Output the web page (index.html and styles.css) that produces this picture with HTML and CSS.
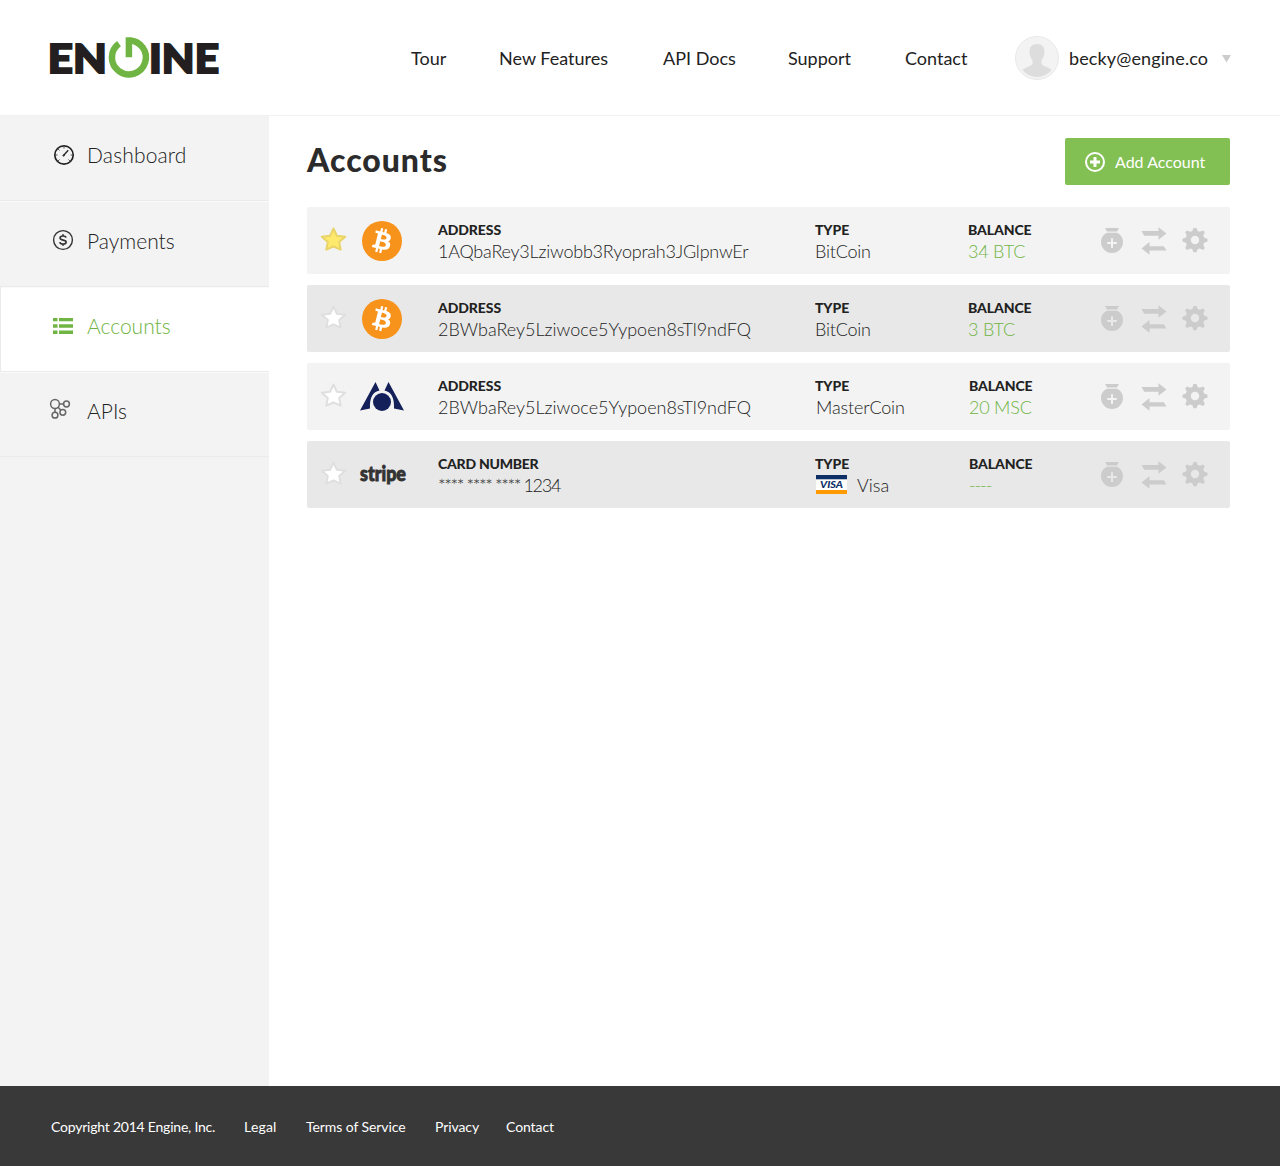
FILE: index.html
```html
<!DOCTYPE html>
<html lang="en">
<head>
<meta charset="utf-8">
<title>Engine – Accounts</title>
<link rel="stylesheet" href="styles.css">
</head>
<body>
<svg class="defs" width="0" height="0" aria-hidden="true">
  <symbol id="star" viewBox="0 0 28 26"><path d="M14 2.500l3.400 7.200 8.300 1-6 5.400 1.500 7.600-7.200-3.200-7.200 3.200 1.500-7.600-6-5.400 8.300-1z" stroke-width="2" stroke-linejoin="round"/></symbol>
  <symbol id="bitcoin" viewBox="0 0 64 64"><circle cx="32" cy="32" r="32" fill="#f7931a"/><path fill="#fff" d="M46.100 27.400c.6-4.300-2.600-6.500-7.100-8.100l1.400-5.800-3.500-.9-1.400 5.600-2.800-.7 1.400-5.600-3.500-.9-1.400 5.700-7.100-1.800-.9 3.800s2.600.6 2.500.6c1.400.4 1.700 1.300 1.600 2l-4 15.900c-.2.4-.6 1.100-1.600.8l-2.500-.6-1.700 4 7 1.800-1.500 5.800 3.500.9 1.400-5.800 2.800.7-1.400 5.700 3.500.9 1.400-5.800c6 1.100 10.500.7 12.400-4.700 1.500-4.400-.1-6.900-3.200-8.500 2.300-.5 4-2 4.500-5zm-8 11.200c-1.100 4.400-8.400 2-10.800 1.400l1.900-7.700c2.400.6 10 1.800 8.900 6.300zm1.100-11.300c-1 4-7.100 2-9.100 1.500l1.800-7c2 .5 8.300 1.400 7.300 5.500z"/></symbol>
  <symbol id="bag" viewBox="0 0 24 26"><path d="M5 0h14l-2 3.500H7z"/><path fill-rule="evenodd" d="M7 4.800h10c3.600 1.800 6 4.800 6 9.200a11 11 0 0 1-22 0C1 9.600 3.400 6.600 7 4.800zm4 5.500v3.800H7.200V16H11v4h2v-4h3.800v-1.900H13v-3.800z"/></symbol>
  <symbol id="swap" viewBox="0 0 26 28"><path d="M.5 4h17V.2l8 6.300-8 6.300V8.700H3.200z"/><path d="M25.500 23.500h-17v4.200l-8-6.300 8-6.300v4.100h14.300z"/></symbol>
  <symbol id="gear" viewBox="0 0 26 26"><path fill-rule="evenodd" d="M11.500 1h3l1.100 3 2.100.8 3.400-1.400 1.700 1.900-1.500 3.200.8 2 3.400 1.300v2.700l-3.400 1.300-.8 2 1.500 3.200-1.700 1.900-3.400-1.400-2.100.8L14.500 25.200h-3l-1.100-2.900-2.100-.8-3.400 1.400L3.200 21l1.500-3.200-.8-2L.5 14.500v-2.700l3.400-1.300.8-2-1.500-3.200 1.700-1.900 3.400 1.400 2.100-.8zM13 8.800a4.200 4.200 0 1 0 0 8.400 4.200 4.200 0 0 0 0-8.400z"/></symbol>
</svg>

<header class="header">
  <svg class="logo" width="170" height="44" viewBox="0 0 170 44" role="img" aria-label="Engine">
    <g class="logo-text">
      <text x="-2.200" y="36.500" textLength="59" lengthAdjust="spacingAndGlyphs">EN</text>
      <text x="99" y="36.500" textLength="70" lengthAdjust="spacingAndGlyphs">INE</text>
    </g>
    <path d="M69 7.600A17 17 0 1 0 78.800 4.400H75.700M78.900 1.200V21.300" fill="none" stroke="#70b544" stroke-width="6.500"/>
  </svg>
  <nav class="nav">
    <a>Tour</a><a>New Features</a><a>API Docs</a><a>Support</a><a>Contact</a>
  </nav>
  <div class="user">
    <svg width="44" height="44" viewBox="0 0 44 44"><circle cx="22" cy="22" r="21.500" fill="#f3f3f3" stroke="#e8e8e8"/><path fill="#ddd" d="M22 8c5 0 7.800 3.200 7.500 8-.2 3.500-1.300 6-3 8v3.500c0 2.500 7 3.500 10 6.500A19 19 0 0 1 22 41 19 19 0 0 1 7.500 34c3-3 10-4 10-6.500V24c-1.700-2-2.800-4.500-3-8-.3-4.800 2.500-8 7.500-8z"/></svg>
    <span class="email">becky@engine.co</span>
    <svg class="caret" width="9" height="8" viewBox="0 0 9 8"><path d="M0 0h9L4.500 7.500z" fill="#ccc"/></svg>
  </div>
</header>

<div class="body">
  <aside class="sidebar">
    <a class="item first">
      <svg width="24" height="24" viewBox="0 0 24 24" fill="none" stroke="#222"><circle cx="13" cy="12" r="9.200" stroke-width="1.700"/><path d="M12.500 12.500l4.700-5.200" stroke-width="1.300"/><circle cx="12.600" cy="12.500" r=".7"/><path stroke="#555" d="M13 3v2.500M4 12h2.500M19.500 12H22M7 6l1.500 1.500M7 18l1.500-1.500M19 18l-1.500-1.500"/></svg>
      <span>Dashboard</span></a>
    <a class="item payments">
      <svg width="24" height="24" viewBox="0 0 24 24" fill="none" stroke="#333"><circle cx="12" cy="11" r="9.400" stroke-width="1.400"/><path d="M15 8.600C14.700 7.400 13.500 7 12 7c-1.700 0-2.900.7-2.900 2 0 2.900 6 1.200 6 4 0 1.400-1.300 2.100-3 2.100-1.800 0-3-.7-3.200-2M12 5.300V7M12 15v1.800" stroke-width="1.700"/></svg>
      <span>Payments</span></a>
    <a class="item active">
      <svg width="24" height="24" viewBox="0 0 24 24" fill="#70b544"><path d="M2 4h4.500v3.300H2zM8 4h14v3.300H8zM2 10.300h4.500v3.400H2zM8 10.300h14v3.400H8zM2 16.600h4.500V20H2zM8 16.600h14V20H8z"/></svg>
      <span>Accounts</span></a>
    <a class="item apis">
      <svg width="24" height="24" viewBox="0 0 24 24" fill="none" stroke="#666" stroke-width="1.500"><circle cx="4" cy="5" r="4.400"/><circle cx="15.500" cy="5" r="2.900"/><circle cx="11.800" cy="13.300" r="2.900"/><circle cx="4" cy="16.200" r="2.900"/><path d="M8.400 5h4.200M4 9.400v3.900M7.200 8.200l2.500 2.900"/></svg>
      <span>APIs</span></a>
  </aside>

  <main class="main">
    <div class="title-row">
      <h1>Accounts</h1>
      <a class="add"><svg width="20" height="20" viewBox="0 0 20 20" fill="none" stroke="#fff"><circle cx="10" cy="10" r="9" stroke-width="2"/><path d="M10 5v10M5 10h10" stroke-width="3"/></svg><span>Add Account</span></a>
    </div>

    <section class="row">
      <svg class="star on"><use href="#star"/></svg>
      <div class="brand"><svg width="40" height="40"><use href="#bitcoin"/></svg></div>
      <div class="cell"><b>ADDRESS</b><span class="tight">1AQbaRey3Lziwobb3Ryoprah3JGlpnwEr</span></div>
      <div class="cell"><b>TYPE</b><span class="tight">BitCoin</span></div>
      <div class="cell money"><b>BALANCE</b><span class="tight">34 BTC</span></div>
      <div class="tools"><svg class="bag"><use href="#bag"/></svg><svg class="swap"><use href="#swap"/></svg><svg class="gear"><use href="#gear"/></svg></div>
    </section>
    <section class="row alt">
      <svg class="star"><use href="#star"/></svg>
      <div class="brand"><svg width="40" height="40"><use href="#bitcoin"/></svg></div>
      <div class="cell"><b>ADDRESS</b><span>2BWbaRey5Lziwoce5Yypoen8sTl9ndFQ</span></div>
      <div class="cell"><b>TYPE</b><span class="tight">BitCoin</span></div>
      <div class="cell money"><b>BALANCE</b><span class="tight">3 BTC</span></div>
      <div class="tools"><svg class="bag"><use href="#bag"/></svg><svg class="swap"><use href="#swap"/></svg><svg class="gear"><use href="#gear"/></svg></div>
    </section>
    <section class="row">
      <svg class="star"><use href="#star"/></svg>
      <div class="brand"><svg width="46" height="32" viewBox="0 0 46 32" fill="#14205a"><circle cx="23" cy="21" r="9"/><path d="M16.500 1l4 8.500C14 11 10.500 16 11 27.500L1 29.500zM29.500 1l-4 8.500C32 11 35.500 16 35 27.500l10 2z"/></svg></div>
      <div class="cell"><b>ADDRESS</b><span>2BWbaRey5Lziwoce5Yypoen8sTl9ndFQ</span></div>
      <div class="cell"><b>TYPE</b><span class="master">MasterCoin</span></div>
      <div class="cell money shift"><b>BALANCE</b><span class="tight">20 MSC</span></div>
      <div class="tools"><svg class="bag"><use href="#bag"/></svg><svg class="swap"><use href="#swap"/></svg><svg class="gear"><use href="#gear"/></svg></div>
    </section>
    <section class="row alt">
      <svg class="star"><use href="#star"/></svg>
      <div class="brand"><svg class="stripe-logo" width="50" height="32" viewBox="0 0 50 32"><text class="stripe" x="3" y="21.500" textLength="46" lengthAdjust="spacingAndGlyphs">stripe</text></svg></div>
      <div class="cell"><b class="card-label">CARD NUMBER</b><span class="card"><span class="mask">**** **** **** </span>1234</span></div>
      <div class="cell"><b>TYPE</b><span class="visa-line"><svg width="31" height="19" viewBox="0 0 31 19"><path fill="#fff" d="M0 0h31v19H0z"/><path fill="#0e2f66" d="M0 0h31v4.300H0z"/><path fill="#ff9a00" d="M0 15h31v4H0z"/><text class="visa" x="4" y="13.300" textLength="23" lengthAdjust="spacingAndGlyphs">VISA</text></svg><span>Visa</span></span></div>
      <div class="cell money shift"><b>BALANCE</b><span class="none">----</span></div>
      <div class="tools"><svg class="bag"><use href="#bag"/></svg><svg class="swap"><use href="#swap"/></svg><svg class="gear"><use href="#gear"/></svg></div>
    </section>
  </main>
</div>

<footer class="footer"><span class="copyright">Copyright 2014 Engine, Inc.</span><a class="legal">Legal</a><a>Terms of Service</a><a>Privacy</a><a>Contact</a></footer>
</body>
</html>
```
FILE: styles.css
```css
* { box-sizing: border-box; }
body { margin: 0; min-height: 1166px; display: flex; flex-direction: column; font-family: Lato, "Liberation Sans", sans-serif; color: #222; background: #fff; }
svg { display: block; flex: none; }
.defs { position: absolute; }

.header { height: 116px; border-bottom: 1px solid #f1f1f1; display: flex; align-items: center; padding-left: 50px; }
.logo { overflow: visible; }
.logo-text { font-weight: 900; font-size: 40.5px; fill: #231f20; stroke: #231f20; stroke-width: 2px; }
.nav { margin-left: 191px; width: 604px; display: grid; grid-template-columns: 88px 164px 125px 117px 1fr; font-size: 18px; line-height: 24px; white-space: nowrap; }
.user { display: flex; align-items: center; }
.email { margin-left: 10px; width: 153px; font-size: 18px; line-height: 24px; letter-spacing: .12px; }
.caret { margin-top: 3px; }

.body { flex: 1; display: flex; }
.sidebar { width: 269px; background: #f3f3f3; }
.item { height: 85px; display: flex; align-items: center; gap: 12px; padding: 0 0 6px 51px; font-size: 21px; font-weight: 300; border-bottom: 1px solid #ebebeb; box-shadow: inset 0 1px #fafafa; }
.item span { margin-top: -2px; }
.item.first { box-shadow: none; }
.item.first span { letter-spacing: .15px; }
.item.payments { height: 86px; }
.item.payments span { margin-top: 0; }
.item.active { background: #fff; color: #70b544; border-left: 1px solid #ebebeb; padding-left: 50px; }
.item.apis svg { overflow: visible; }

.main { flex: 1; padding: 22px 50px 0 38px; }
.title-row { height: 47px; display: flex; justify-content: space-between; margin-bottom: 22px; }
h1 { margin: 0; font-size: 32px; font-weight: 900; line-height: 43px; letter-spacing: .95px; color: #2b2b2b; }
.add { width: 165px; background: #82c053; border-radius: 2px; color: #fff; display: flex; align-items: center; gap: 10px; padding-left: 20px; font-size: 16px; }

.row { height: 67px; margin-bottom: 11px; border-radius: 2px; background: #f3f3f3; display: grid; grid-template-columns: 42px 67px 377px 153px 133px 1fr; padding-left: 12px; }
.row.alt { background: #e8e8e8; }
.star { width: 29px; height: 26px; margin-top: 19px; fill: #fff; stroke: #dfdfdf; }
.star.on { fill: #fde96c; stroke: #e8d468; }
.brand { display: flex; align-items: center; justify-content: center; width: 42px; }
.cell { padding: 14px 0 0 10px; display: flex; flex-direction: column; white-space: nowrap; }
.cell.shift { padding-left: 11px; }
.cell b { font-size: 14px; line-height: 18px; font-weight: 900; letter-spacing: -.1px; }
.cell > span { font-size: 18px; line-height: 24px; font-weight: 300; }
.cell > .tight { letter-spacing: -.22px; }
.cell > .master { padding-left: 1px; letter-spacing: -.15px; }
.cell .card-label { letter-spacing: -.25px; }
.cell > .card { letter-spacing: -1.3px; }
.mask { letter-spacing: -1.4px; }
.cell > .none { letter-spacing: -1.1px; }
.money > span { color: #70b544; }
.visa-line { display: flex; align-items: center; gap: 10px; padding-left: 1px; }
.visa-line svg { margin-top: -2px; }
.visa { font-weight: 900; font-style: italic; font-size: 10px; fill: #0e2f66; }
.stripe-logo { overflow: visible; }
.stripe { font-weight: 900; font-size: 21px; fill: #333; stroke: #333; stroke-width: .9px; }
.tools { display: flex; fill: #ccc; padding-left: 9px; }
.bag { width: 24px; height: 26px; margin-top: 21px; }
.swap { width: 26px; height: 28px; margin: 20px 0 0 17px; }
.gear { width: 26px; height: 26px; margin: 20px 0 0 15px; }

.footer { height: 80px; background: #393939; color: #fff; display: grid; grid-template-columns: 193px 62px 129px 71px 1fr; padding: 31px 0 0 51px; font-size: 14px; line-height: 20px; letter-spacing: -.08px; }
.copyright { letter-spacing: -.22px; }
.legal { letter-spacing: .2px; }
```
